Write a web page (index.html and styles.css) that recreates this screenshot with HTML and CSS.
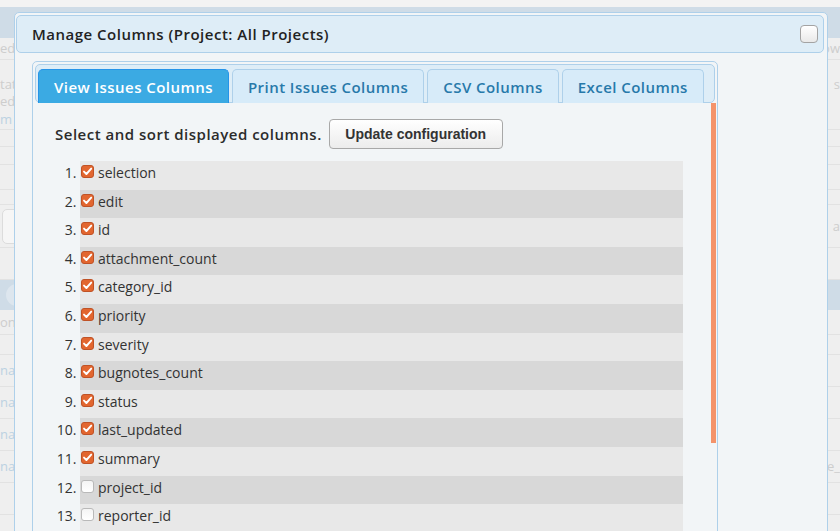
FILE: index.html
```html
<!DOCTYPE html>
<html lang="en">
<head>
<meta charset="utf-8">
<title>Manage Columns</title>
<link rel="stylesheet" href="styles.css">
</head>
<body>
<div class="page">
  <div class="bg-top"></div>
  <div class="bg-band"></div>
  <div class="bg-row h22"><span class="fade">ed</span><span class="fade">ow</span></div>
  <div class="bg-row h15 plain"></div>
  <div class="bg-row h18 plain"><span class="fade">tat</span><span class="fade">s</span></div>
  <div class="bg-row h17 plain"><span class="fade">ed</span></div>
  <div class="bg-row h20"><span class="fade blue">m</span></div>
  <div class="bg-row h17"></div>
  <div class="bg-row h18"></div>
  <div class="bg-row h25"></div>
  <div class="bg-row h15"></div>
  <div class="bg-row h43"><span class="bg-btn"></span><span class="fade">a</span></div>
  <div class="bg-row h32"></div>
  <div class="bg-band h30"><span class="bg-circle"></span></div>
  <div class="bg-row h25"><span class="fade">on</span></div>
  <div class="bg-row h20"></div>
  <div class="bg-row h32"><span class="fade blue">na</span></div>
  <div class="bg-row h32"><span class="fade blue">na</span></div>
  <div class="bg-row h32"><span class="fade blue">na</span></div>
  <div class="bg-row h32"><span class="fade blue">na</span><span class="fade">ge_</span></div>
  <div class="bg-row h32"></div>
</div>

<div class="dialog">
  <div class="dialog-header">
    <span class="dialog-title">Manage Columns (Project: All Projects)</span>
    <button class="dialog-close" type="button" aria-label="Close"></button>
  </div>
  <div class="dialog-content">
    <div class="tabs">
      <ul class="tab-nav">
        <li class="tab active">View Issues Columns</li>
        <li class="tab">Print Issues Columns</li>
        <li class="tab">CSV Columns</li>
        <li class="tab">Excel Columns</li>
      </ul>
      <div class="tab-panel">
        <div class="intro">
          <span class="intro-text">Select and sort displayed columns.</span>
          <button class="btn" type="button">Update configuration</button>
        </div>
        <ol class="cols">
          <li><span class="cb on"></span>selection</li>
          <li><span class="cb on"></span>edit</li>
          <li><span class="cb on"></span>id</li>
          <li><span class="cb on"></span>attachment_count</li>
          <li><span class="cb on"></span>category_id</li>
          <li><span class="cb on"></span>priority</li>
          <li><span class="cb on"></span>severity</li>
          <li><span class="cb on"></span>bugnotes_count</li>
          <li><span class="cb on"></span>status</li>
          <li><span class="cb on"></span>last_updated</li>
          <li><span class="cb on"></span>summary</li>
          <li><span class="cb"></span>project_id</li>
          <li><span class="cb"></span>reporter_id</li>
        </ol>
      </div>
      <div class="scroll-thumb"></div>
    </div>
  </div>
</div>
</body>
</html>
```
FILE: styles.css
```css
* { box-sizing: border-box; }
html, body {
  margin: 0;
  padding: 0;
  height: 531px;
  overflow: hidden;
}
body {
  background: #efefef;
  font-family: "Open Sans", "Liberation Sans", sans-serif;
  color: #333;
  position: relative;
}

/* background page */
.page { display: flex; flex-direction: column; }
.bg-top { height: 7px; background: #f3f3f3; }
.bg-band { height: 31px; background: #cfdce7; display: flex; align-items: center; padding-left: 6px; }
.bg-band.h30 { height: 30px; }
.bg-row {
  border-bottom: 1px solid #e2e2e2;
  display: flex;
  justify-content: space-between;
  align-items: center;
  font-size: 13px;
  line-height: 15px;
  overflow: hidden;
}
.bg-row.plain { border-bottom: 0; }
.h15 { height: 15px; } .h17 { height: 17px; } .h18 { height: 18px; } .h20 { height: 20px; }
.h22 { height: 22px; } .h25 { height: 25px; } .h32 { height: 32px; } .h43 { height: 43px; }
.fade { color: #cdcdcd; }
.fade.blue { color: #bcd2e2; }
.bg-btn {
  width: 60px; height: 35px; margin-left: 2px;
  border: 1px solid #dcdcdc; border-radius: 5px; background: #f6f6f6;
}
.bg-circle { width: 22px; height: 22px; border-radius: 50%; background: #dde6ee; }

/* dialog */
.dialog {
  position: absolute;
  left: 14px;
  top: 12px;
  width: 814px;
  height: 540px;
  background: #f2f5f7;
  border: 1px solid #aed0ea;
  border-radius: 5px;
  padding: 2px 3px 0 1px;
  display: flex;
  flex-direction: column;
}
.dialog-header {
  height: 38px;
  background: #deedf7;
  border: 1px solid #aed0ea;
  border-radius: 5px;
  display: flex;
  align-items: center;
  justify-content: space-between;
  padding: 0 5px 0 15px;
}
.dialog-title {
  font-size: 15px;
  font-weight: 600;
  color: #222;
  letter-spacing: 0.5px;
}
.dialog-close {
  width: 18px;
  height: 18px;
  padding: 0;
  border: 1px solid #a3a3a3;
  border-radius: 4px;
  background: linear-gradient(#ffffff, #e9e9e9);
  box-shadow: inset 0 1px 0 #fff;
}
.dialog-content {
  padding: 8px 0 0 16px;
  flex: 1;
}

/* tabs */
.tabs {
  position: relative;
  width: 686px;
  height: 480px;
  border: 1px solid #aed0ea;
  border-radius: 5px;
  padding: 2px;
  display: flex;
  flex-direction: column;
}
.tab-nav {
  list-style: none;
  margin: 0;
  height: 39px;
  padding: 4px 2px 0;
  background: #deedf7;
  border: 1px solid #aed0ea;
  border-radius: 5px;
  display: flex;
  gap: 3px;
  align-items: flex-end;
}
.tab {
  height: 34px;
  margin-bottom: -1px;
  padding: 0 15px;
  border: 1px solid #aed0ea;
  border-bottom: 0;
  border-radius: 5px 5px 0 0;
  background: #d7ebf9;
  color: #2779aa;
  font-size: 15px;
  font-weight: 600;
  letter-spacing: 0.45px;
  display: flex;
  align-items: center;
  white-space: nowrap;
}
.tab.active {
  background: #3baae3;
  border-color: #2694e8;
  color: #fff;
}
.tab-panel {
  padding: 16px 32px 0 20px;
}
.intro {
  display: flex;
  align-items: center;
  gap: 7px;
}
.intro-text {
  font-size: 15px;
  font-weight: 600;
  color: #2b2b2b;
  letter-spacing: 0.5px;
}
.btn {
  height: 30px;
  width: 174px;
  padding: 0;
  border: 1px solid #a8a8a8;
  border-radius: 4px;
  background: linear-gradient(#ffffff, #ececec);
  font-family: "Liberation Sans", Arial, sans-serif;
  font-weight: bold;
  font-size: 14px;
  color: #333;
}
.cols {
  margin: 12px 0 0;
  padding: 0 0 0 25px;
  font-size: 14px;
  color: #333;
}
.cols li {
  height: 28.6px;
  line-height: 23px;
  background: #e8e8e8;
}
.cols li:nth-child(even) { background: #d8d8d8; }
.cb {
  display: inline-block;
  vertical-align: top;
  width: 13px;
  height: 13px;
  margin: 4px 4px 0 1px;
  border: 1px solid #b9b9b9;
  border-radius: 3px;
  background: linear-gradient(#f4f4f4, #ffffff);
}
.cb.on {
  border-color: #bf5226;
  background-color: #e2662f;
  background-image: url("data:image/svg+xml,%3Csvg xmlns='http://www.w3.org/2000/svg' viewBox='0 0 11 11'%3E%3Cpath d='M2 5.6 L4.4 8 L9.2 2.6' fill='none' stroke='white' stroke-width='1.9' stroke-linecap='round' stroke-linejoin='round'/%3E%3C/svg%3E");
  background-size: 11px 11px;
  background-position: center;
  background-repeat: no-repeat;
}
.scroll-thumb {
  position: absolute;
  right: 1px;
  top: 41px;
  width: 5px;
  height: 340px;
  background: #f4936a;
}
```
